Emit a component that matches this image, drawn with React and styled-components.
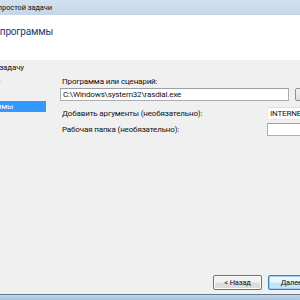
import React from "react"
import styled, { createGlobalStyle } from "styled-components"

const GlobalStyle = createGlobalStyle`
  html, body {
    margin: 0;
    padding: 0;
    width: 300px;
    height: 300px;
    overflow: hidden;
    background: #f0f0f0;
  }
`

const Window = styled.div`
  width: 300px;
  height: 300px;
  display: flex;
  flex-direction: column;
  overflow: hidden;
  font-family: Roboto, "Noto Sans", sans-serif;
  font-size: 8px;
  letter-spacing: -0.15px;
  color: #111;
`

const TitleBar = styled.div`
  height: 15px;
  flex-shrink: 0;
  display: flex;
  align-items: center;
  background: linear-gradient(#d3e1f0, #c4d6e9);
`

// text anchored by its right end, overflowing off the left edge
const Clip = styled.div`
  width: ${p => p.w}px;
  flex-shrink: 0;
  display: flex;
  justify-content: flex-end;
  white-space: nowrap;
  span { flex-shrink: 0; }
`

const TitleText = styled.span`
  font-size: 7.5px;
  letter-spacing: -0.1px;
`

const Header = styled.div`
  height: 45px;
  flex-shrink: 0;
  background: #fff;
  padding-top: 11px;
  box-sizing: border-box;
`

const Heading = styled.span`
  font-size: 10px;
  letter-spacing: -0.2px;
  color: #1c3a70;
`

const Body = styled.div`
  flex: 1;
  display: flex;
  flex-direction: column;
  background: #f0f0f0;
`

const Main = styled.div`
  flex: 1;
  display: flex;
`

const Nav = styled.div`
  width: 46px;
  flex-shrink: 0;
  padding-top: 2px;
  display: flex;
  flex-direction: column;
  gap: 2px;
`

const NavItem = styled.div`
  height: 11px;
  display: flex;
  align-items: center;
  justify-content: flex-end;
  padding-right: ${p => p.inset}px;
  white-space: nowrap;
  background: ${p => (p.active ? "#3399ff" : "transparent")};
  color: ${p => (p.active ? "#fff" : "#111")};
  span { flex-shrink: 0; }
`

const Content = styled.div`
  flex: 1;
  margin-right: -40px;
  padding: 17px 0 0 14px;
  display: flex;
  flex-direction: column;
`

const Label = styled.div`
  padding-left: 2px;
  white-space: nowrap;
`

const ProgramRow = styled.div`
  display: flex;
  gap: 6px;
  margin-top: 2px;
`

const Input = styled.div`
  height: 13px;
  box-sizing: border-box;
  border: 1px solid ${p => (p.faint ? "#e8e8e8" : "#abadb3")};
  border-top-color: ${p => (p.faint ? "#e0e0e0" : "#9da0a6")};
  background: #fff;
  display: flex;
  align-items: center;
  padding-left: 2px;
  white-space: nowrap;
  overflow: hidden;
  flex: ${p => (p.grow ? 1 : "none")};
  width: ${p => (p.grow ? "auto" : "73px")};
`

const BrowseButton = styled.div`
  width: 45px;
  height: 13px;
  flex-shrink: 0;
  box-sizing: border-box;
  border: 1px solid #8e8f8f;
  border-radius: 2px;
  background: linear-gradient(#f2f2f2, #dddddd);
`

const FieldRow = styled.div`
  display: flex;
  align-items: center;
  justify-content: space-between;
  margin-top: ${p => p.top}px;
`

const Footer = styled.div`
  height: 30px;
  flex-shrink: 0;
  display: flex;
  justify-content: flex-end;
  gap: 6px;
  padding-top: 11px;
  box-sizing: border-box;
  margin-right: -20px;
`

const Button = styled.div`
  width: ${p => p.w}px;
  height: 15px;
  box-sizing: border-box;
  border: 1px solid ${p => (p.primary ? "#3c7fb1" : "#707070")};
  border-radius: 2px;
  background: ${p =>
    p.primary
      ? "linear-gradient(#eaf6fd 45%, #bee6fd 55%)"
      : "linear-gradient(#f2f2f2 45%, #dddddd 55%)"};
  box-shadow: ${p => (p.primary ? "inset 0 0 0 1px #9ccff1" : "inset 0 0 0 1px #fbfbfb")};
  display: flex;
  align-items: center;
  justify-content: center;
  font-size: 7.5px;
`

const Frame = styled.div`
  height: 5px;
  flex-shrink: 0;
  border-top: 1px solid #64788a;
  background: linear-gradient(#c2d7ec, #a9c3dc);
`

export default function App() {
  return (
    <>
      <GlobalStyle />
      <Window>
        <TitleBar>
          <Clip w={52}>
            <TitleText>Мастер создания простой задачи</TitleText>
          </Clip>
        </TitleBar>
        <Header>
          <Clip w={53}>
            <Heading>Запуск программы</Heading>
          </Clip>
        </Header>
        <Body>
          <Main>
            <Nav>
              <NavItem inset={22}><span>Создать простую задачу</span></NavItem>
              <NavItem inset={70}><span>Триггер</span></NavItem>
              <NavItem inset={70}><span>Действие</span></NavItem>
              <NavItem inset={33} active><span>Запуск программы</span></NavItem>
              <NavItem inset={70}><span>Завершить</span></NavItem>
            </Nav>
            <Content>
              <Label>Программа или сценарий:</Label>
              <ProgramRow>
                <Input grow>C:\Windows\system32\rasdial.exe</Input>
                <BrowseButton />
              </ProgramRow>
              <FieldRow top={6}>
                <Label>Добавить аргументы (необязательно):</Label>
                <Input faint>INTERNET</Input>
              </FieldRow>
              <FieldRow top={3}>
                <Label>Рабочая папка (необязательно):</Label>
                <Input>&nbsp;</Input>
              </FieldRow>
            </Content>
          </Main>
          <Footer>
            <Button w={49}>&lt; Назад</Button>
            <Button w={52} primary>Далее &gt;</Button>
          </Footer>
        </Body>
        <Frame />
      </Window>
    </>
  )
}
